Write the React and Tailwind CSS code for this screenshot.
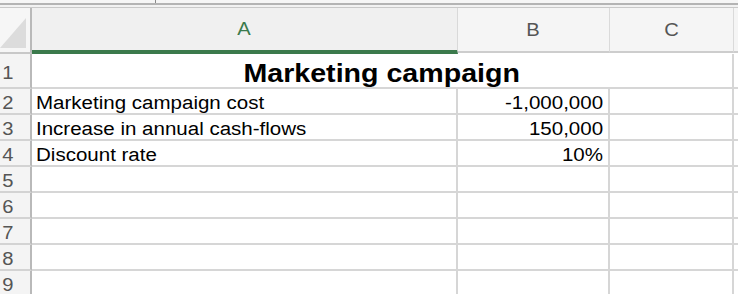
import React from "react";

const font = { fontFamily: '"Liberation Sans", Arial, Helvetica, sans-serif' };

function RowHead({ n, h = "h-[26px]", leading = "leading-[20px]" }) {
  return (
    <div className={`w-[32px] shrink-0 ${h} bg-[#f4f4f4] border-r-2 border-r-[#b9b9b9] border-b-2 border-b-[#d3d3d3] flex items-end`}>
      <span className={`pl-[2px] text-[18px] ${leading} text-[#555555] origin-left scale-x-[1.12] inline-block`}>{n}</span>
    </div>
  );
}

function Cell({ w, children, align = "left" }) {
  return (
    <div className={`${w} shrink-0 h-[26px] border-r-2 border-b-2 border-[#d6d6d6] flex items-end ${align === "right" ? "justify-end pr-[5px]" : "justify-start pl-[4px]"}`}>
      {children != null && (
        <span className={`text-[18px] leading-[20px] text-black whitespace-nowrap inline-block scale-x-[1.14] ${align === "right" ? "origin-right" : "origin-left"}`}>
          {children}
        </span>
      )}
    </div>
  );
}

const rows = [
  [2, "Marketing campaign cost", "-1,000,000"],
  [3, "Increase in annual cash-flows", "150,000"],
  [4, "Discount rate", "10%"],
  [5, null, null],
  [6, null, null],
  [7, null, null],
  [8, null, null],
  [9, null, null],
];

export default function App() {
  return (
    <div className="w-[738px] h-[294px] overflow-hidden bg-white" style={font}>
      {/* top strip */}
      <div className="relative h-[8px] bg-[#f6f6f6]">
        <div className="absolute left-[155px] top-0 w-[1px] h-[3px] bg-[#8a8a8a]"></div>
        <div className="h-[3px]"></div>
        <div className="h-[2px] bg-[#b4b4b4]"></div>
        <div className="h-[2px] bg-[#f2f2f2]"></div>
        <div className="h-[1px] bg-[#c9c9c9]"></div>
      </div>
      {/* column header */}
      <div className="flex h-[46px] items-start">
        <div className="w-[32px] h-[46px] shrink-0 bg-[#f6f6f6] border-r-2 border-r-[#b9b9b9] border-b-2 border-b-[#c8c8c8]">
          <svg width="30" height="44" viewBox="0 0 30 44">
            <polygon points="0,40 26,10 26,40" fill="#dcdcdc" />
          </svg>
        </div>
        <div className="w-[426px] h-[46px] shrink-0 bg-[#f0f0f0] border-r border-r-[#d9d9d9] border-b-4 border-b-[#3b7a4c] flex items-center justify-center">
          <span className="text-[18px] text-[#3b7a4c] inline-block scale-x-[1.12]">A</span>
        </div>
        <div className="w-[152px] h-[45px] shrink-0 bg-[#f5f5f5] border-r border-r-[#dadada] border-b-2 border-b-[#cdcdcd] flex items-center justify-center pt-[1px]">
          <span className="text-[18px] text-[#555555] inline-block scale-x-[1.12]">B</span>
        </div>
        <div className="w-[124px] h-[45px] shrink-0 bg-[#f5f5f5] border-r border-r-[#dadada] border-b-2 border-b-[#cdcdcd] flex items-center justify-center pt-[1px]">
          <span className="text-[18px] text-[#555555] inline-block scale-x-[1.12]">C</span>
        </div>
        <div className="flex-1 h-[45px] bg-[#f5f5f5] border-b-2 border-b-[#cdcdcd]"></div>
      </div>
      {/* row 1 */}
      <div className="flex">
        <RowHead n={1} h="h-[35px]" leading="leading-[28px]" />
        <div className="w-[702px] shrink-0 h-[35px] border-r-2 border-b-2 border-[#d6d6d6] flex items-end justify-center">
          <span className="text-[26px] leading-[28px] font-bold text-black whitespace-nowrap inline-block scale-x-[1.1]">
            Marketing campaign
          </span>
        </div>
        <div className="flex-1 h-[35px] border-b-2 border-[#d6d6d6]"></div>
      </div>
      {rows.map(([n, a, b]) => (
        <div key={n} className="flex">
          <RowHead n={n} />
          <Cell w="w-[426px]">{a}</Cell>
          <Cell w="w-[152px]" align="right">{b}</Cell>
          <Cell w="w-[124px]" />
          <div className="flex-1 h-[26px] border-b-2 border-[#d6d6d6]"></div>
        </div>
      ))}
    </div>
  );
}
